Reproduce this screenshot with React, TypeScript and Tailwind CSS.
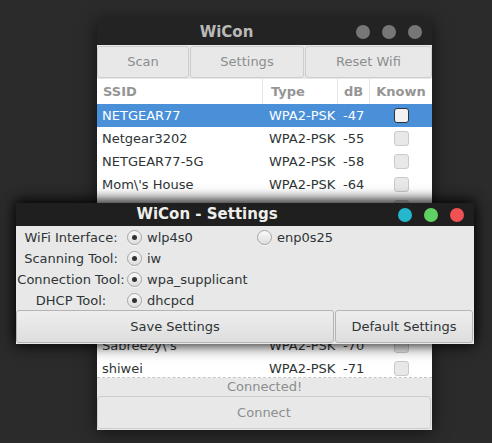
import React from 'react';

// rows 5-10 sit behind the settings dialog, so their text is never seen
const networks = [
  { ssid: 'NETGEAR77', type: 'WPA2-PSK', db: '-47' },
  { ssid: 'Netgear3202', type: 'WPA2-PSK', db: '-55' },
  { ssid: 'NETGEAR77-5G', type: 'WPA2-PSK', db: '-58' },
  { ssid: "Mom\\'s House", type: 'WPA2-PSK', db: '-64' },
  { ssid: '', type: '', db: '' },
  { ssid: '', type: '', db: '' },
  { ssid: '', type: '', db: '' },
  { ssid: '', type: '', db: '' },
  { ssid: '', type: '', db: '' },
  { ssid: '', type: '', db: '' },
  { ssid: "Sabreezy\\'s", type: 'WPA2-PSK', db: '-70' },
  { ssid: 'shiwei', type: 'WPA2-PSK', db: '-71' },
];

function Dot({ color }: { color: string }) {
  return <span className={`block w-[14px] h-[14px] rounded-full ${color}`} />;
}

function Radio({ checked }: { checked?: boolean }) {
  return (
    <span className="w-[15px] h-[15px] rounded-full border border-[#a4a4a4] bg-linear-to-b from-[#fafafa] to-[#dedede] flex items-center justify-center shrink-0 shadow-[0_1px_0_rgba(255,255,255,0.6)]">
      {checked && <span className="w-[5px] h-[5px] rounded-full bg-[#2e3436]" />}
    </span>
  );
}

function Option({ label, checked }: { label: string; checked?: boolean }) {
  return (
    <div className="flex items-center gap-[5px] pl-px">
      <Radio checked={checked} />
      <span>{label}</span>
    </div>
  );
}

function MainWindow() {
  return (
    <div className="absolute left-[97px] top-[19px] w-[335px] flex flex-col bg-[#e8e8e8] shadow-[0_2px_16px_rgba(0,0,0,0.6)]">
      <div className="h-[26px] bg-[#232323] flex items-center">
        <span className="flex-1 text-center text-[15px] font-bold text-[#b9b9b9]">WiCon</span>
        <div className="flex gap-[12px] pr-[10px]">
          <Dot color="bg-[#767676]" />
          <Dot color="bg-[#767676]" />
          <Dot color="bg-[#767676]" />
        </div>
      </div>

      <div className="h-[34px] flex gap-px py-px text-[#8b8e8f]">
        <button className="w-[92px] rounded-[3px] border border-[#cdcdcd] bg-[#e8e8e8]">Scan</button>
        <button className="w-[114px] rounded-[3px] border border-[#cdcdcd] bg-[#e8e8e8]">Settings</button>
        <button className="flex-1 rounded-[3px] border border-[#cdcdcd] bg-[#e8e8e8]">Reset Wifi</button>
      </div>

      <div className="h-[299px] overflow-hidden bg-white border-b border-dashed border-[#c4c4c4]">
        <div className="h-[25px] flex font-bold text-[#959595]">
          <div className="w-[166px] pl-[6px] flex items-center border-r border-[#e4e4e4]">SSID</div>
          <div className="w-[75px] pl-[8px] flex items-center border-r border-[#e4e4e4]">Type</div>
          <div className="w-[32px] pl-[6px] flex items-center border-r border-[#e4e4e4]">dB</div>
          <div className="flex-1 flex items-center justify-center">Known</div>
        </div>
        {networks.map((n, i) => {
          const sel = i === 0;
          return (
            <div
              key={i}
              className={`h-[23px] flex items-center ${sel ? 'bg-[#4a90d9] text-white' : 'text-[#2e3436]'}`}
            >
              <div className="w-[166px] pl-[5px] whitespace-nowrap">{n.ssid}</div>
              <div className="w-[75px] pl-[6px]">{n.type}</div>
              <div className="w-[32px] pl-[5px]">{n.db}</div>
              <div className="flex-1 flex justify-center">
                <span
                  className={`w-[15px] h-[15px] rounded-[3px] border ${
                    sel ? 'bg-[#f2f2f2] border-[#2e3436]' : 'bg-[#e8e8e8] border-[#cacaca]'
                  }`}
                />
              </div>
            </div>
          );
        })}
      </div>

      <div className="h-[18px] flex items-center justify-center text-[#8b8e8f]">Connected!</div>
      <div className="pb-px">
        <button className="w-[334px] h-[33px] rounded-[3px] border border-[#cdcdcd] bg-[#e8e8e8] text-[#8b8e8f]">
          Connect
        </button>
      </div>
    </div>
  );
}

function SettingsWindow() {
  return (
    <div className="absolute left-[16px] top-[203px] w-[458px] flex flex-col bg-[#e8e8e8] text-[#2e3436] shadow-[0_-3px_12px_rgba(0,0,0,0.75),0_2px_14px_rgba(0,0,0,0.65)]">
      <div className="h-[23px] bg-[#1f1f1f] flex items-center">
        <span className="flex-1 text-center text-[15px] font-bold text-[#eeeeec]">WiCon - Settings</span>
        <div className="flex gap-[12px] pr-[10px]">
          <Dot color="bg-[#25b7cd]" />
          <Dot color="bg-[#5fd163]" />
          <Dot color="bg-[#f05152]" />
        </div>
      </div>

      <div className="grid grid-cols-[110px_130px_1fr] auto-rows-[21px] items-center h-[84px] pt-px">
        <span className="text-center">WiFi Interface:</span>
        <Option label="wlp4s0" checked />
        <Option label="enp0s25" />

        <span className="text-center">Scanning Tool:</span>
        <Option label="iw" checked />
        <span />

        <span className="text-center">Connection Tool:</span>
        <Option label="wpa_supplicant" checked />
        <span />

        <span className="text-center">DHCP Tool:</span>
        <Option label="dhcpcd" checked />
        <span />
      </div>

      <div className="flex gap-px h-[34px] pb-px">
        <button className="w-[318px] rounded-[3px] border border-[#b4b4b4] bg-linear-to-b from-[#eeeeee] to-[#dedede]">
          Save Settings
        </button>
        <button className="flex-1 mr-px rounded-[3px] border border-[#b4b4b4] bg-linear-to-b from-[#eeeeee] to-[#dedede]">
          Default Settings
        </button>
      </div>
    </div>
  );
}

export default function App() {
  return (
    <div className="relative w-[492px] h-[443px] overflow-hidden bg-[#2b2b2b] font-['DejaVu_Sans',sans-serif] text-[13px]">
      <MainWindow />
      <SettingsWindow />
    </div>
  );
}
